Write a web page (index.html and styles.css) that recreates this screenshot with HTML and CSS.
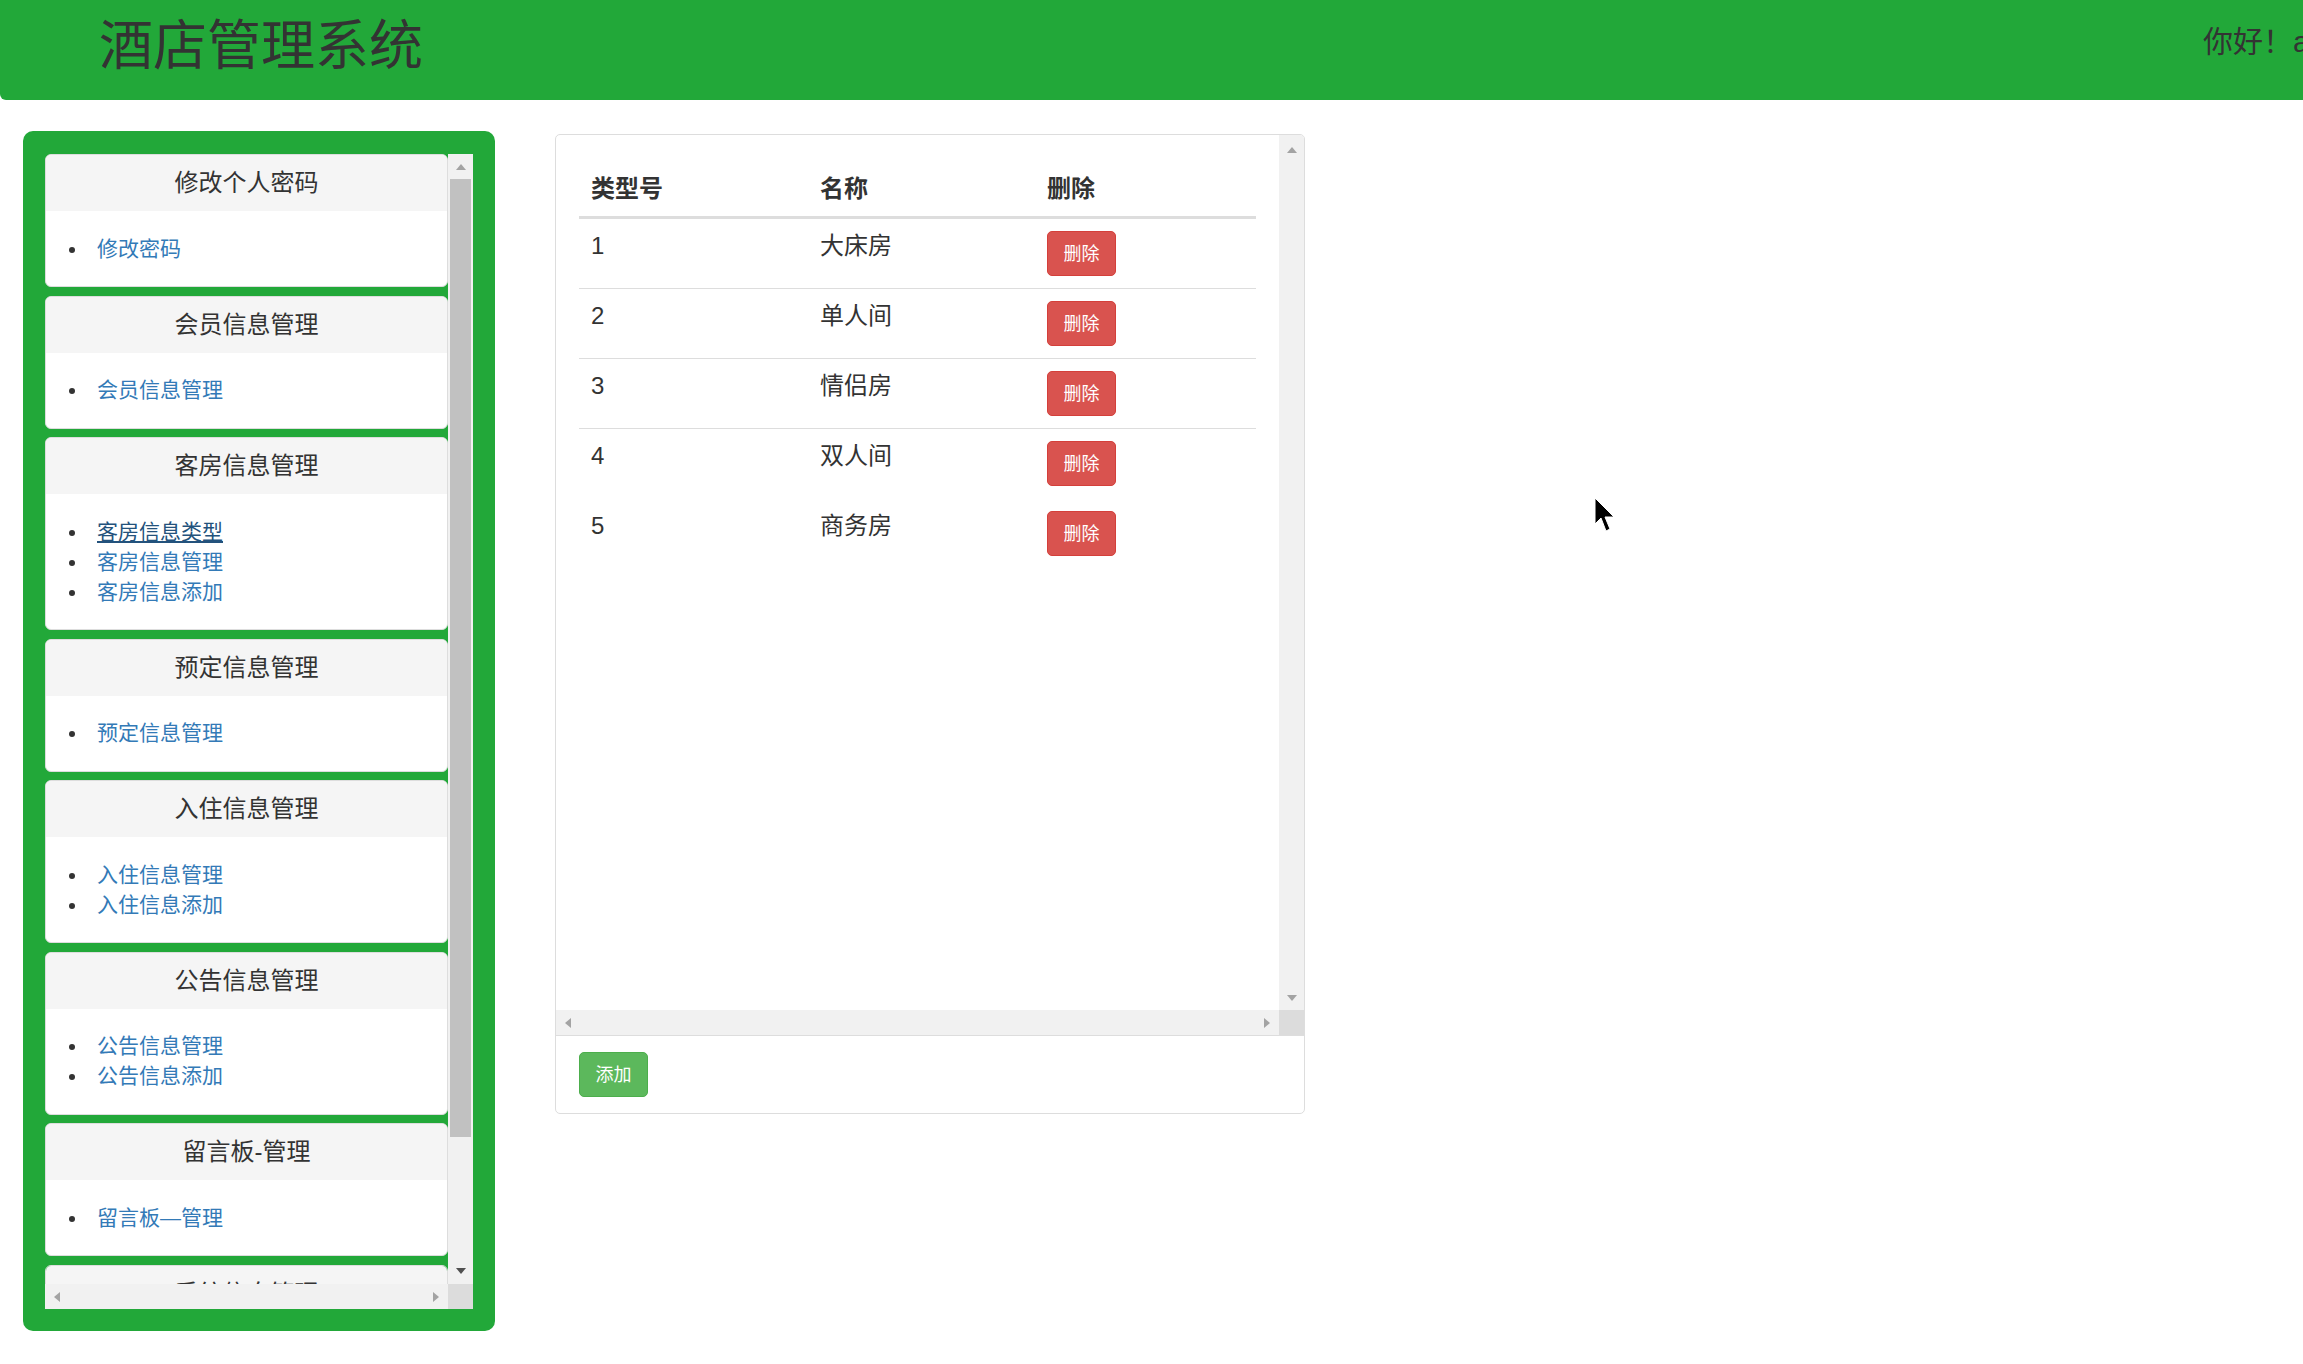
FILE: index.html
```html
<!DOCTYPE html>
<html lang="zh-CN">
<head>
<meta charset="utf-8">
<title>酒店管理系统</title>
<link rel="stylesheet" href="styles.css">
</head>
<body>
<header class="topbar">
  <h1 class="brand">酒店管理系统</h1>
  <div class="greeting">你好！admin</div>
</header>

<div class="layout">
  <aside class="sidebar">
    <div class="frame">
      <div class="frame-view">
        <div class="panel">
          <div class="panel-heading">修改个人密码</div>
          <div class="panel-body"><ul class="menu"><li><a href="#">修改密码</a></li></ul></div>
        </div>
        <div class="panel">
          <div class="panel-heading">会员信息管理</div>
          <div class="panel-body"><ul class="menu"><li><a href="#">会员信息管理</a></li></ul></div>
        </div>
        <div class="panel">
          <div class="panel-heading">客房信息管理</div>
          <div class="panel-body"><ul class="menu">
            <li><a href="#" class="active">客房信息类型</a></li>
            <li><a href="#">客房信息管理</a></li>
            <li><a href="#">客房信息添加</a></li>
          </ul></div>
        </div>
        <div class="panel">
          <div class="panel-heading">预定信息管理</div>
          <div class="panel-body"><ul class="menu"><li><a href="#">预定信息管理</a></li></ul></div>
        </div>
        <div class="panel">
          <div class="panel-heading">入住信息管理</div>
          <div class="panel-body"><ul class="menu">
            <li><a href="#">入住信息管理</a></li>
            <li><a href="#">入住信息添加</a></li>
          </ul></div>
        </div>
        <div class="panel">
          <div class="panel-heading">公告信息管理</div>
          <div class="panel-body"><ul class="menu">
            <li><a href="#">公告信息管理</a></li>
            <li><a href="#">公告信息添加</a></li>
          </ul></div>
        </div>
        <div class="panel">
          <div class="panel-heading">留言板-管理</div>
          <div class="panel-body"><ul class="menu"><li><a href="#">留言板—管理</a></li></ul></div>
        </div>
        <div class="panel">
          <div class="panel-heading">系统信息管理</div>
        </div>
      </div>
      <div class="vbar">
        <span class="arrow-up"></span>
        <span class="thumb"></span>
        <span class="arrow-down dark"></span>
      </div>
      <div class="hbar">
        <span class="arrow-left"></span>
        <span class="arrow-right"></span>
      </div>
      <div class="corner"></div>
    </div>
  </aside>

  <main class="content">
    <div class="inner-frame">
      <div class="inner-view">
        <table class="types">
          <colgroup><col class="c1"><col class="c2"><col class="c3"></colgroup>
          <thead>
            <tr><th>类型号</th><th>名称</th><th>删除</th></tr>
          </thead>
          <tbody>
            <tr class="first"><td>1</td><td>大床房</td><td><button class="btn btn-danger">删除</button></td></tr>
            <tr><td>2</td><td>单人间</td><td><button class="btn btn-danger">删除</button></td></tr>
            <tr><td>3</td><td>情侣房</td><td><button class="btn btn-danger">删除</button></td></tr>
            <tr><td>4</td><td>双人间</td><td><button class="btn btn-danger">删除</button></td></tr>
            <tr class="faint"><td>5</td><td>商务房</td><td><button class="btn btn-danger">删除</button></td></tr>
          </tbody>
        </table>
      </div>
      <div class="vbar main">
        <span class="arrow-up"></span>
        <span class="arrow-down"></span>
      </div>
      <div class="hbar">
        <span class="arrow-left"></span>
        <span class="arrow-right"></span>
      </div>
      <div class="corner"></div>
    </div>
    <div class="footer">
      <button class="btn btn-success">添加</button>
    </div>
  </main>
</div>

<svg class="cursor" width="22" height="36" viewBox="0 0 22 36">
  <polygon points="1,1 1,27 7,21 12,34 16,32 11,20 20,20" fill="#000" stroke="#fff" stroke-width="1"/>
</svg>
</body>
</html>
```

FILE: styles.css
```css
* {
  box-sizing: border-box;
}

html,
body {
  margin: 0;
  padding: 0;
}

body {
  position: relative;
  width: 2303px;
  height: 1364px;
  overflow: hidden;
  background: #fff;
  color: #333;
  font-family: "Liberation Sans", "Noto Sans CJK SC", sans-serif;
}

/* ---------- top bar ---------- */
.topbar {
  display: flex;
  align-items: flex-start;
  height: 100px;
  padding-top: 19px;
  background: #22a839;
  border-bottom-left-radius: 6px;
  overflow: hidden;
}

.brand {
  margin: 0 0 0 99px;
  font-size: 54px;
  line-height: 54px;
  font-weight: normal;
  white-space: nowrap;
  color: #333;
}

.greeting {
  width: 100px;
  min-width: 0;
  flex: none;
  margin-left: auto;
  margin-top: 8px;
  font-size: 30px;
  line-height: 30px;
  white-space: nowrap;
  color: #333;
}

/* ---------- layout ---------- */
.layout {
  display: flex;
  align-items: flex-start;
  padding: 31px 0 0 23px;
}

/* ---------- sidebar ---------- */
.sidebar {
  width: 472px;
  height: 1200px;
  padding: 23px 22px 22px 22px;
  background: #22a839;
  border-radius: 10px;
}

.frame {
  display: grid;
  grid-template-columns: 1fr 25px;
  grid-template-rows: 1fr 25px;
  height: 100%;
}

.frame-view {
  overflow: hidden;
}

.panel {
  margin-bottom: 8.5px;
  background: #fff;
  border: 1px solid #ddd;
  border-radius: 6px;
  overflow: hidden;
}

.panel-heading {
  height: 56px;
  line-height: 56px;
  text-align: center;
  background: #f5f5f5;
  font-size: 24px;
  color: #333;
}

.panel-body {
  padding: 22.5px 22px;
}

.menu {
  list-style: none;
  margin: 0;
  padding: 0;
}

.menu li {
  display: flex;
  align-items: center;
  height: 30px;
  font-size: 21px;
  line-height: 30px;
}

.menu li::before {
  content: "";
  flex: none;
  width: 6px;
  height: 6px;
  margin: 2px 22px 0 1px;
  border-radius: 50%;
  background: #333;
}

.menu a {
  color: #337ab7;
  text-decoration: none;
}

.menu a.active {
  color: #23527c;
  text-decoration: underline;
}

/* ---------- fake scrollbars ---------- */
.vbar {
  display: flex;
  flex-direction: column;
  align-items: center;
  background: #f1f1f1;
}

.hbar {
  display: flex;
  align-items: center;
  justify-content: space-between;
  padding: 0 9px;
  background: #f1f1f1;
}

.corner {
  background: #dcdcdc;
}

.arrow-up,
.arrow-down,
.arrow-left,
.arrow-right {
  display: block;
  width: 0;
  height: 0;
}

.arrow-up {
  margin-top: 10px;
  border-left: 5.5px solid transparent;
  border-right: 5.5px solid transparent;
  border-bottom: 6px solid #a3a3a3;
}

.arrow-down {
  margin-top: auto;
  margin-bottom: 10px;
  border-left: 5.5px solid transparent;
  border-right: 5.5px solid transparent;
  border-top: 6px solid #a3a3a3;
}

.arrow-down.dark {
  border-top-color: #505050;
}

.arrow-left {
  border-top: 5.5px solid transparent;
  border-bottom: 5.5px solid transparent;
  border-right: 6px solid #a3a3a3;
}

.arrow-right {
  border-top: 5.5px solid transparent;
  border-bottom: 5.5px solid transparent;
  border-left: 6px solid #a3a3a3;
}

.thumb {
  display: block;
  width: 21px;
  height: 958px;
  margin-top: 9px;
  background: #c1c1c1;
}

.vbar.main .arrow-up {
  margin-top: 12px;
}

.vbar.main .arrow-down {
  margin-bottom: 9px;
}

/* ---------- main content ---------- */
.content {
  display: flex;
  flex-direction: column;
  width: 750px;
  height: 980px;
  margin: 3px 0 0 60px;
  border: 1px solid #ddd;
  border-radius: 5px;
  overflow: hidden;
}

.inner-frame {
  display: grid;
  grid-template-columns: 1fr 25px;
  grid-template-rows: 1fr 25px;
  height: 901px;
  flex: none;
  border-bottom: 1px solid #ddd;
}

.inner-view {
  padding: 27px 24px 0 23px;
  overflow: hidden;
}

.types {
  width: 677px;
  table-layout: fixed;
  border-collapse: separate;
  border-spacing: 0;
  color: #333;
}

.types .c1 {
  width: 229px;
}

.types .c2 {
  width: 227px;
}

.types .c3 {
  width: 221px;
}

.types th {
  padding: 12px 12px;
  font-size: 24px;
  line-height: 30px;
  font-weight: bold;
  text-align: left;
  border-bottom: 3px solid #ddd;
}

.types td {
  padding: 12px 12px;
  font-size: 24px;
  line-height: 30px;
  vertical-align: top;
  border-top: 1px solid #ddd;
}

.types tr.first td {
  border-top: 0;
}

.types tr.faint td {
  border-top-color: transparent;
}

.btn {
  display: flex;
  align-items: center;
  justify-content: center;
  width: 69px;
  height: 45px;
  padding: 0;
  border: 1px solid transparent;
  border-radius: 5px;
  font-family: "Liberation Sans", "Noto Sans CJK SC", sans-serif;
  font-size: 18px;
  line-height: 1;
  color: #fff;
}

.btn-danger {
  background: #d9534f;
  border-color: #d43f3a;
}

.btn-success {
  background: #5cb85c;
  border-color: #4cae4c;
}

.footer {
  padding: 16px 23px 0;
}

/* ---------- mouse pointer ---------- */
.cursor {
  position: absolute;
  left: 1594px;
  top: 497px;
}
```
